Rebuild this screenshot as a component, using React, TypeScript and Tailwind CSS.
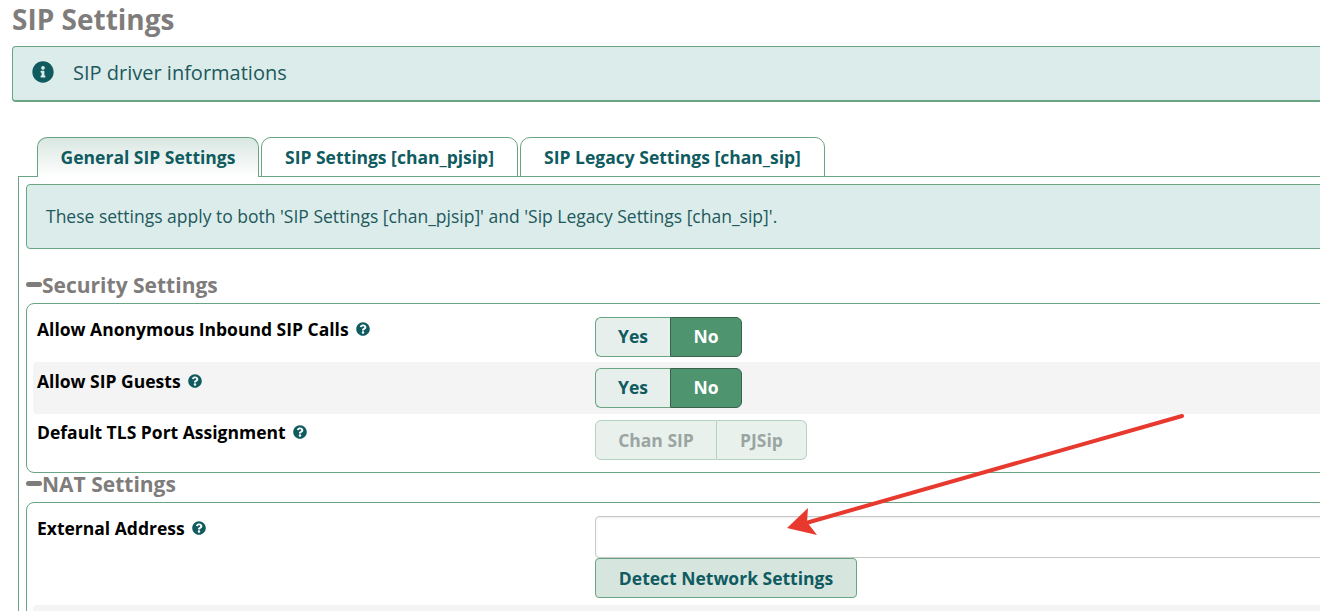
import { FaInfoCircle, FaQuestionCircle } from "react-icons/fa";

function Help() {
  return <FaQuestionCircle className="inline-block text-[14px] text-[#0f5b5f]" />;
}

function Label({ text, extra = "" }: { text: string; extra?: string }) {
  return (
    <div className={`w-[562px] shrink-0 pl-1 h-6 text-[17.5px] leading-[24px] font-bold text-black flex items-center gap-[7px] ${extra}`}>
      <span>{text}</span>
      <Help />
    </div>
  );
}

function Toggle({ a, b, disabled, aw, bw }: { a: string; b: string; disabled?: boolean; aw: string; bw: string }) {
  if (disabled) {
    return (
      <div className="flex h-10 text-[17.5px] font-bold text-[#9aa5a2]">
        <div className={`${aw} flex items-center justify-center rounded-l-md border border-[#b4d2c2] bg-[#e9f1ed]`}>{a}</div>
        <div className={`${bw} flex items-center justify-center rounded-r-md border border-l-0 border-[#b4d2c2] bg-[#e9f1ed]`}>{b}</div>
      </div>
    );
  }
  return (
    <div className="flex h-10 text-[17.5px] font-bold">
      <div className={`${aw} pb-[2px] flex items-center justify-center rounded-l-md border border-r-0 border-[#6aa583] bg-[#e6efeb] text-[#0f5b5f]`}>{a}</div>
      <div className={`${bw} pb-[2px] flex items-center justify-center rounded-r-md border border-[#39634d] bg-[#4d946f] text-white`}>{b}</div>
    </div>
  );
}

function SectionTitle({ text }: { text: string }) {
  return (
    <div className="flex items-center h-[24px] text-[21px] font-bold text-[#7f7c7c] leading-[24px]">
      <span className="w-4 h-[5px] rounded-sm bg-[#7f7c7c] -translate-y-px" />
      <span>{text}</span>
    </div>
  );
}

export default function App() {
  return (
    <div className="relative w-[1320px] h-[611px] overflow-hidden bg-white font-['Open_Sans',sans-serif]">
      <div className="w-[1500px] pl-3">
        <h1 className="h-[46px] text-[28px] leading-[38px] font-bold text-[#7f7c7c]">SIP Settings</h1>
        <div className="h-[56px] flex items-center rounded-[4px] border border-b-2 border-[#6aa583] bg-[#dcecea] pl-[19px] text-[20px] text-[#20585c]">
          <FaInfoCircle className="text-[22px] text-[#0f5b5f] mr-[19px] -translate-y-[2px]" />
          <span className="-translate-y-px">SIP driver informations</span>
        </div>
      </div>

      <div className="w-[1500px] pl-[18px] mt-[35px]">
        <div className="flex pl-[19px] h-[40px] relative z-10 text-[17.5px] font-bold text-[#0f5b5f]">
          <div className="w-[222px] h-[40px] flex items-center justify-center rounded-t-[10px] border border-b-0 border-[#6aa583] bg-gradient-to-b from-[#d9e7e2] to-white">General SIP Settings</div>
          <div className="ml-[2px] w-[257px] h-[40px] pt-px flex items-center justify-center rounded-t-[10px] border border-[#6aa583] bg-white">SIP Settings [chan_pjsip]</div>
          <div className="ml-[2px] w-[305px] h-[40px] pt-px flex items-center justify-center rounded-t-[10px] border border-[#6aa583] bg-white">SIP Legacy Settings [chan_sip]</div>
        </div>
        <div className="-mt-px border-l border-t border-[#6aa583] pl-[7px] pt-[7px] h-[500px]">
          <div className="h-[65px] flex items-center rounded-[4px] border border-[#6aa583] bg-[#dcecea] pl-[19px] text-[17.5px] text-[#20585c]">
            These settings apply to both 'SIP Settings [chan_pjsip]' and 'Sip Legacy Settings [chan_sip]'.
          </div>

          <div className="mt-[24px]"><SectionTitle text="Security Settings" /></div>
          <div className="mt-[6px] h-[170px] rounded-[8px] border border-[#6aa583] px-[6px] pt-[13px]">
            <div className="h-[45px] flex">
              <Label text="Allow Anonymous Inbound SIP Calls" />
              <Toggle a="Yes" b="No" aw="w-[75px]" bw="w-[72px]" />
            </div>
            <div className="h-[52px] flex bg-[#f4f4f4] rounded-[4px] pt-[6px]">
              <Label text="Allow SIP Guests" extra="mt-px" />
              <Toggle a="Yes" b="No" aw="w-[75px]" bw="w-[72px]" />
            </div>
            <div className="flex pt-[6px]">
              <Label text="Default TLS Port Assignment" />
              <Toggle a="Chan SIP" b="PJSip" disabled aw="w-[122px]" bw="w-[90px]" />
            </div>
          </div>

          <div className="mt-[-1px]"><SectionTitle text="NAT Settings" /></div>
          <div className="mt-[6px] h-[200px] rounded-t-[8px] border border-[#6aa583] px-[6px] pt-[13px]">
            <div className="flex h-[89px]">
              <Label text="External Address" />
              <div>
                <input className="block w-[800px] h-[42px] rounded-[4px] border border-[#c8c8c8] bg-white shadow-[inset_0_1px_2px_rgba(0,0,0,0.08)] outline-none" readOnly />
                <button className="block w-[262px] h-10 rounded-[4px] border border-[#6aa583] bg-[#d7e5df] text-[17.5px] font-bold text-[#0f5b5f]">Detect Network Settings</button>
              </div>
            </div>
            <div className="h-[40px] bg-[#f4f4f4] rounded-[4px]" />
          </div>
        </div>
      </div>

      <svg className="absolute left-0 top-0 pointer-events-none" width="1320" height="611" viewBox="0 0 1320 611" fill="none">
        <line x1="1182" y1="416" x2="806" y2="523" stroke="#e8392e" strokeWidth="4" strokeLinecap="round" />
        <path d="M808 508 L787 528 L817 535 L807 522 Z" fill="#e8392e" />
      </svg>
    </div>
  );
}
